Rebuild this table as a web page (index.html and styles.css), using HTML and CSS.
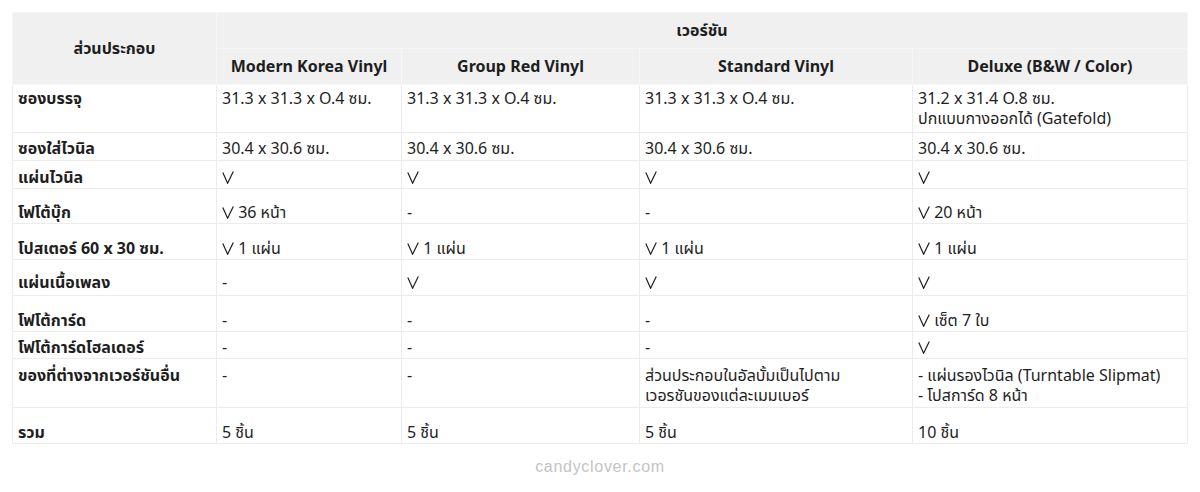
FILE: index.html
```html
<!DOCTYPE html>
<html lang="th">
<head>
<meta charset="utf-8">
<title>Vinyl versions</title>
<link rel="stylesheet" href="styles.css">
</head>
<body>
<table class="spec">
  <colgroup>
    <col class="c1"><col class="c2"><col class="c3"><col class="c4"><col class="c5">
  </colgroup>
  <thead>
    <tr class="h1">
      <th rowspan="2" class="part">ส่วนประกอบ</th>
      <th colspan="4">เวอร์ชัน</th>
    </tr>
    <tr class="h2">
      <th>Modern Korea Vinyl</th>
      <th>Group Red Vinyl</th>
      <th>Standard Vinyl</th>
      <th>Deluxe (B&amp;W / Color)</th>
    </tr>
  </thead>
  <tbody>
    <tr class="r1">
      <th>ซองบรรจุ</th>
      <td>31.3 x 31.3 x O.4 ซม.</td>
      <td>31.3 x 31.3 x O.4 ซม.</td>
      <td>31.3 x 31.3 x O.4 ซม.</td>
      <td>31.2 x 31.4 O.8 ซม.<br>ปกแบบกางออกได้ (Gatefold)</td>
    </tr>
    <tr class="r2">
      <th>ซองใส่ไวนิล</th>
      <td>30.4 x 30.6 ซม.</td>
      <td>30.4 x 30.6 ซม.</td>
      <td>30.4 x 30.6 ซม.</td>
      <td>30.4 x 30.6 ซม.</td>
    </tr>
    <tr class="r3">
      <th>แผ่นไวนิล</th>
      <td><svg class="chk" viewBox="0 0 12 13"><polyline points="0.8,1.6 5.6,12.2 11.3,0.4"/></svg></td>
      <td><svg class="chk" viewBox="0 0 12 13"><polyline points="0.8,1.6 5.6,12.2 11.3,0.4"/></svg></td>
      <td><svg class="chk" viewBox="0 0 12 13"><polyline points="0.8,1.6 5.6,12.2 11.3,0.4"/></svg></td>
      <td><svg class="chk" viewBox="0 0 12 13"><polyline points="0.8,1.6 5.6,12.2 11.3,0.4"/></svg></td>
    </tr>
    <tr class="r4">
      <th>โฟโต้บุ๊ก</th>
      <td><svg class="chk" viewBox="0 0 12 13"><polyline points="0.8,1.6 5.6,12.2 11.3,0.4"/></svg> 36 หน้า</td>
      <td>-</td>
      <td>-</td>
      <td><svg class="chk" viewBox="0 0 12 13"><polyline points="0.8,1.6 5.6,12.2 11.3,0.4"/></svg> 20 หน้า</td>
    </tr>
    <tr class="r5">
      <th>โปสเตอร์ 60 x 30 ซม.</th>
      <td><svg class="chk" viewBox="0 0 12 13"><polyline points="0.8,1.6 5.6,12.2 11.3,0.4"/></svg> 1 แผ่น</td>
      <td><svg class="chk" viewBox="0 0 12 13"><polyline points="0.8,1.6 5.6,12.2 11.3,0.4"/></svg> 1 แผ่น</td>
      <td><svg class="chk" viewBox="0 0 12 13"><polyline points="0.8,1.6 5.6,12.2 11.3,0.4"/></svg> 1 แผ่น</td>
      <td><svg class="chk" viewBox="0 0 12 13"><polyline points="0.8,1.6 5.6,12.2 11.3,0.4"/></svg> 1 แผ่น</td>
    </tr>
    <tr class="r6">
      <th>แผ่นเนื้อเพลง</th>
      <td>-</td>
      <td><svg class="chk" viewBox="0 0 12 13"><polyline points="0.8,1.6 5.6,12.2 11.3,0.4"/></svg></td>
      <td><svg class="chk" viewBox="0 0 12 13"><polyline points="0.8,1.6 5.6,12.2 11.3,0.4"/></svg></td>
      <td><svg class="chk" viewBox="0 0 12 13"><polyline points="0.8,1.6 5.6,12.2 11.3,0.4"/></svg></td>
    </tr>
    <tr class="r7">
      <th>โฟโต้การ์ด</th>
      <td>-</td>
      <td>-</td>
      <td>-</td>
      <td><svg class="chk" viewBox="0 0 12 13"><polyline points="0.8,1.6 5.6,12.2 11.3,0.4"/></svg> เซ็ต 7 ใบ</td>
    </tr>
    <tr class="r8">
      <th>โฟโต้การ์ดโฮลเดอร์</th>
      <td>-</td>
      <td>-</td>
      <td>-</td>
      <td><svg class="chk" viewBox="0 0 12 13"><polyline points="0.8,1.6 5.6,12.2 11.3,0.4"/></svg></td>
    </tr>
    <tr class="r9">
      <th>ของที่ต่างจากเวอร์ชันอื่น</th>
      <td>-</td>
      <td>-</td>
      <td>ส่วนประกอบในอัลบั้มเป็นไปตาม<br>เวอรชันของแต่ละเมมเบอร์</td>
      <td>- แผ่นรองไวนิล (Turntable Slipmat)<br>- โปสการ์ด 8 หน้า</td>
    </tr>
    <tr class="r10">
      <th>รวม</th>
      <td>5 ชิ้น</td>
      <td>5 ชิ้น</td>
      <td>5 ชิ้น</td>
      <td>10 ชิ้น</td>
    </tr>
  </tbody>
</table>
<p class="credit">candyclover.com</p>
</body>
</html>
```

FILE: styles.css
```css
html, body {
  margin: 0;
  padding: 0;
  background: #ffffff;
}

body {
  font-family: "Noto Sans", "Noto Sans Thai", "Noto Sans Thai UI", sans-serif;
  color: #1e1e1e;
}

.spec {
  margin: 12px 0 0 12px;
  border-collapse: collapse;
  table-layout: fixed;
  width: 1175px;
  font-size: 16px;
  line-height: 20px;
}

.c1 { width: 204px; }
.c2 { width: 185px; }
.c3 { width: 238px; }
.c4 { width: 273px; }
.c5 { width: 275px; }

.spec th,
.spec td {
  border: 1px solid #ececec;
  padding: 4px 5px;
  text-align: left;
  vertical-align: top;
  font-weight: 400;
}

.spec thead th {
  background: #f0f0f0;
  border-color: #f6f6f6;
  text-align: center;
  vertical-align: middle;
  font-weight: 700;
  padding: 7px 5px 8px;
}

.spec tbody th {
  font-weight: 700;
}

.r1 th, .r1 td { padding-top: 3px; padding-bottom: 4px; }
.r2 th, .r2 td { padding-top: 5px; padding-bottom: 2px; }
.r3 th, .r3 td { padding-top: 6px; padding-bottom: 1px; }
.r4 th, .r4 td { padding-top: 13px; padding-bottom: 1px; }
.r5 th, .r5 td { padding-top: 14px; padding-bottom: 1px; }
.r6 th, .r6 td { padding-top: 12px; padding-bottom: 3px; }
.r7 th, .r7 td { padding-top: 14px; padding-bottom: 1px; }
.r8 th, .r8 td { padding-top: 5px; padding-bottom: 1px; }
.r9 th, .r9 td { padding-top: 6px; padding-bottom: 2px; }
.r10 th, .r10 td { padding-top: 14px; padding-bottom: 1px; }

.chk {
  width: 12px;
  height: 13px;
  vertical-align: -1px;
  fill: none;
  stroke: #1e1e1e;
  stroke-width: 1.2;
  stroke-linejoin: miter;
}

.credit {
  margin: 13px 0 0;
  text-align: center;
  font-family: "Liberation Sans", Arial, sans-serif;
  font-size: 16px;
  line-height: 20px;
  letter-spacing: 0.7px;
  color: #c4c4c4;
}
```
